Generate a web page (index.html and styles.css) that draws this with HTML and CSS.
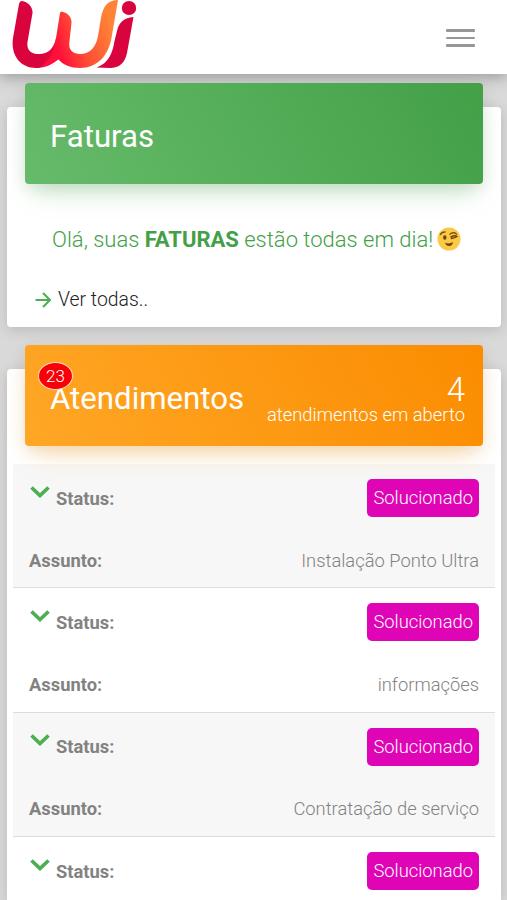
FILE: index.html
```
<!DOCTYPE html>
<html lang="pt-br">
<head>
<meta charset="UTF-8">
<meta name="viewport" content="width=device-width, initial-scale=1">
<title>Central do Assinante</title>
<link rel="stylesheet" href="styles.css">
</head>
<body>

<nav class="navbar">
<svg class="logo" viewBox="0 0 126 70" role="img" aria-label="Wi">
<defs>
<linearGradient id="left" x1="0" y1="0" x2="1" y2="0">
<stop offset="0" stop-color="#d9043d"/>
<stop offset=".5" stop-color="#d9043d"/>
<stop offset="1" stop-color="#ff1238"/>
</linearGradient>
<linearGradient id="right" gradientUnits="userSpaceOnUse" x1="42" y1="40" x2="96" y2="20">
<stop offset="0" stop-color="#ff0f3a"/>
<stop offset=".4" stop-color="#ff4a35"/>
<stop offset="1" stop-color="#ff8236"/>
</linearGradient>
</defs>
<path fill="url(#left)" d="M10 1C16 2 21 7 20.500 13L15.500 42C14.500 49 18 53.500 25 54C35 55 42 49 44 38L58 50C52 57 46 59.500 45.500 60C38 66 31 68 24 68C8 68-1.500 55 1 38L7 4C7.500 2 8.500 1 10 1Z"/>
<path fill="url(#right)" d="M49 11.500C55 12 60 17 59.500 23L57.500 41C56 49 60 54 68 54C78 54 84 47 86 36L89 18C91 6 96 0 106 0L100 35C97 56 85 68 68 68C59 68 51 65 46 59C42 63 35 66 28 67C39 60 43 50 44 38L48 13Z"/>
<path fill="#d9043d" d="M121.500 17L115 53C113 63 107 68 98 68L84.500 67.500C97 63 100.500 53 102.500 41L105 31C107 22 112 18 121.500 17Z"/>
<ellipse cx="117" cy="8" rx="7.200" ry="7" fill="#d9043d"/>
</svg>
<button class="menu" type="button" aria-label="Menu"><span></span><span></span><span></span></button>
</nav>

<main class="content">

<section class="card card-faturas">
<header class="card-header green">
<h4>Faturas</h4>
</header>
<p class="aviso">Olá, suas <b>FATURAS</b> estão todas em dia!
<svg class="emoji" viewBox="0 0 24 24">
<circle cx="12" cy="12" r="11.500" fill="#fbc945"/>
<path d="M3.500 7.500Q4.500 5 8 5M13 7.200Q16 4.500 19.500 7" fill="none" stroke="#79501b" stroke-width="1.500" stroke-linecap="round"/>
<ellipse cx="7.800" cy="10.500" rx="1.700" ry="2.200" fill="#70420f"/>
<path d="M14 10Q18 8 20 9.500Q18 11 14.500 11.500" fill="none" stroke="#70420f" stroke-width="1.500" stroke-linecap="round"/>
<path d="M8 15.500Q12 17.500 16 15Q15.500 19 12 19Q9 19 8 15.500Z" fill="#70420f"/>
</svg>
</p>
<a class="ver-todas" href="#">
<svg class="arrow" viewBox="0 0 16 16"><path d="M.5 8H14.500M8 1L15 8L8 15"/></svg>
<span>Ver todas..</span>
</a>
</section>

<section class="card card-atendimentos">
<header class="card-header orange">
<h4>Atendimentos</h4>
<span class="count">23</span>
<div class="abertos">
<strong>4</strong>
<span>atendimentos em aberto</span>
</div>
</header>

<div class="lista">
<div class="item">
<div class="linha">
<span class="titulo"><svg class="chevron" viewBox="0 0 20 12"><path d="M1.500 1.500L10 9.500L18.500 1.500"/></svg><b>Status:</b></span>
<span class="badge">Solucionado</span>
</div>
<div class="linha"><b>Assunto:</b><span>Instalação Ponto Ultra</span></div>
</div>
<div class="item">
<div class="linha">
<span class="titulo"><svg class="chevron" viewBox="0 0 20 12"><path d="M1.500 1.500L10 9.500L18.500 1.500"/></svg><b>Status:</b></span>
<span class="badge">Solucionado</span>
</div>
<div class="linha"><b>Assunto:</b><span>informações</span></div>
</div>
<div class="item">
<div class="linha">
<span class="titulo"><svg class="chevron" viewBox="0 0 20 12"><path d="M1.500 1.500L10 9.500L18.500 1.500"/></svg><b>Status:</b></span>
<span class="badge">Solucionado</span>
</div>
<div class="linha"><b>Assunto:</b><span>Contratação de serviço</span></div>
</div>
<div class="item">
<div class="linha">
<span class="titulo"><svg class="chevron" viewBox="0 0 20 12"><path d="M1.500 1.500L10 9.500L18.500 1.500"/></svg><b>Status:</b></span>
<span class="badge">Solucionado</span>
</div>
</div>
</div>
</section>

</main>

</body>
</html>
```
FILE: styles.css
```
* {
box-sizing: border-box;
}
body {
margin: 0;
height: 900px;
overflow: hidden;
background: #d9d9d9;
font-family: Roboto, "Liberation Sans", sans-serif;
font-weight: 300;
}
h4, p {
margin: 0;
}
.navbar {
position: relative;
display: flex;
justify-content: space-between;
height: 74px;
padding: 0 32px 0 12px;
background: #fff;
box-shadow: 0 3px 14px rgba(0, 0, 0, .3);
}
.logo {
width: 126px;
height: 70px;
}
.menu {
display: flex;
flex-direction: column;
gap: 5px;
width: 29px;
margin-top: 29px;
padding: 0;
border: 0;
background: none;
}
.menu span {
height: 2.500px;
border-radius: 1px;
background: #979797;
}
.content {
padding: 33px 6px 0 7px;
}
.card {
border-radius: 4px;
background: #fff;
box-shadow: 0 3px 14px rgba(0, 0, 0, .14);
}
.card-faturas {
height: 220px;
margin-bottom: 42px;
padding: 0 18px;
}
.card-atendimentos {
height: 531px;
padding: 0 6px;
border-radius: 4px 4px 0 0;
}
.card-header {
position: relative;
top: -24px;
display: flex;
align-items: center;
justify-content: space-between;
height: 101px;
padding: 0 18px 0 25px;
border-radius: 4px;
color: #fff;
}
.card-header h4 {
padding-top: 6px;
font-size: 31.200px;
font-weight: 400;
line-height: 36px;
}
.green {
background: linear-gradient(60deg, #66bb6a, #43a047);
box-shadow: 0 14px 24px -8px rgba(76, 175, 80, .34), 0 4px 16px rgba(0, 0, 0, .08);
}
.orange {
margin: 0 12px;
background: linear-gradient(60deg, #ffa726, #fb8c00);
box-shadow: 0 14px 24px -8px rgba(255, 152, 0, .34), 0 4px 16px rgba(0, 0, 0, .08);
}
.aviso {
display: flex;
align-items: center;
height: 30px;
margin-top: 17px;
padding-left: 27px;
color: #43a047;
font-size: 22px;
line-height: 32px;
white-space: pre;
}
.aviso b {
font-weight: 700;
}
.emoji {
width: 24px;
height: 24px;
margin: -2px 0 0 4px;
}
.ver-todas {
display: flex;
align-items: center;
gap: 7px;
margin-top: 32px;
padding-left: 10px;
color: #222;
font-size: 19.400px;
line-height: 26px;
text-decoration: none;
}
.arrow {
width: 16px;
height: 16px;
fill: none;
stroke: #4caf50;
stroke-width: 2;
}
.count {
position: absolute;
left: 13px;
top: 17px;
width: 35px;
height: 28px;
border: 1px solid #ffd9b0;
border-radius: 50%;
background: #f80009;
font-size: 17px;
line-height: 26px;
text-align: center;
}
.abertos {
padding-top: 8px;
text-align: right;
font-size: 18.400px;
line-height: 20px;
}
.abertos strong {
display: block;
font-size: 33px;
font-weight: 300;
line-height: 31px;
}
.lista {
height: 454px;
margin-top: -6px;
overflow: hidden;
}
.item {
height: 124.400px;
padding: 15px 16px 0;
border-bottom: 1px solid #dcdcdc;
color: #828282;
font-size: 18.350px;
}
.item:nth-child(odd) {
background: #f7f7f7;
}
.linha {
display: flex;
align-items: center;
justify-content: space-between;
height: 38px;
margin-bottom: 24px;
}
.linha b {
font-weight: 700;
}
.titulo {
display: flex;
align-items: center;
gap: 6px;
padding-left: 1px;
}
.chevron {
width: 20px;
height: 12px;
margin-bottom: 13px;
fill: none;
stroke: #4caf50;
stroke-width: 3.700;
}
.badge {
padding: 0 6px;
border-radius: 5px;
background: #df04b6;
color: #fff;
line-height: 38px;
}
```
